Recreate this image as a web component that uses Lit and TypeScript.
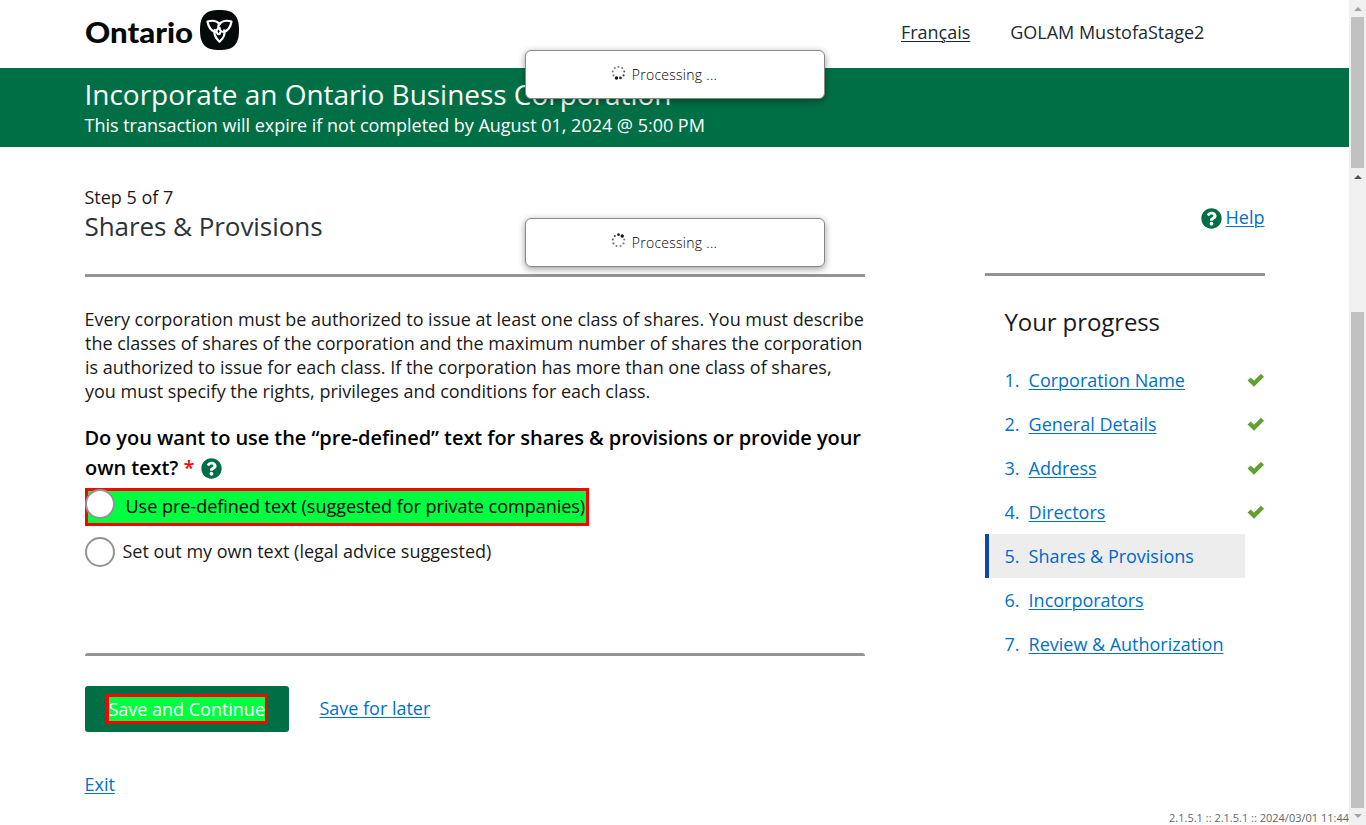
import { LitElement, html, css, svg, nothing } from "lit";
import { customElement, property } from "lit/decorators.js";

@customElement("help-icon")
class HelpIcon extends LitElement {
  static styles = css`
    :host { display: inline-block; width: 21px; height: 21px; }
    svg { display: block; }
  `;
  render() {
    return html`<svg width="21" height="21" viewBox="0 0 512 512">
      <path fill="#006f45" d="M504 256c0 136.997-111.043 248-248 248S8 392.997 8 256C8 119.083 119.043 8 256 8s248 111.083 248 248zM262.655 90c-54.497 0-89.255 22.957-116.549 63.758-3.536 5.286-2.353 12.415 2.715 16.258l34.699 26.31c5.205 3.947 12.621 3.008 16.665-2.122 17.864-22.658 30.113-35.797 57.303-35.797 20.429 0 45.698 13.148 45.698 32.958 0 14.976-12.363 22.667-32.534 33.976C247.128 238.528 216 254.941 216 296v4c0 6.627 5.373 12 12 12h56c6.627 0 12-5.373 12-12v-1.333c0-28.462 83.186-29.647 83.186-106.667 0-58.002-60.165-102-116.531-102zM256 338c-25.365 0-46 20.635-46 46 0 25.364 20.635 46 46 46s46-20.636 46-46c0-25.365-20.635-46-46-46z"/>
    </svg>`;
  }
}

@customElement("processing-box")
class ProcessingBox extends LitElement {
  @property({ type: Number }) lead = 0;
  static styles = css`
    :host {
      display: flex; align-items: center; justify-content: center; box-sizing: border-box;
      width: 300px; height: 49px; padding-right: 22px;
      background: #fff; border: 1px solid #888; border-radius: 6px;
      box-shadow: 0 2px 7px rgba(0, 0, 0, 0.4);
      font-size: 14px; font-weight: 300; color: #000; letter-spacing: 0.27px;
    }
    span { width: 85px; white-space: nowrap; }
    svg { margin: -5px 5.500px 0 0; }
  `;
  render() {
    return html`<svg width="15" height="15" viewBox="0 0 15 15">
      ${Array.from({ length: 9 }, (_, i) => {
        const a = ((this.lead - i * 40) * Math.PI) / 180;
        return svg`<circle cx=${7.5 + 5.8 * Math.sin(a)} cy=${7.5 - 5.8 * Math.cos(a)}
          r=${i < 1 ? 1.7 : i < 2 ? 1.4 : 1.05} fill="#111" opacity=${Math.max(0.55, 1 - i * 0.1)}></circle>`;
      })}
    </svg><span>Processing ...</span>`;
  }
}

const STEPS = [
  { label: "Corporation Name", done: true },
  { label: "General Details", done: true },
  { label: "Address", done: true },
  { label: "Directors", done: true },
  { label: "Shares & Provisions", current: true },
  { label: "Incorporators" },
  { label: "Review & Authorization" },
];

@customElement("app-root")
class AppRoot extends LitElement {
  static styles = css`
    :host {
      display: flex; position: relative; width: 1366px; height: 825px; overflow: hidden;
      background: #fff; color: #1a1a1a; font-family: "Open Sans", sans-serif; font-size: 18px; letter-spacing: -0.015px;
    }
    * { box-sizing: border-box; }
    p, h1, h2, h3, ol { margin: 0; padding: 0; font-weight: 400; }
    p, h1, h2, h3, .step .num { text-indent: -0.5px; }
    a { color: #0070cc; text-decoration: underline; text-decoration-thickness: 1px; text-underline-offset: 2px; }
    .page { width: 1349px; display: flex; flex-direction: column; }
    .top { height: 68px; padding: 0 144.700px 0 85px; display: flex; align-items: center; }
    .logo { display: flex; align-items: center; margin-top: -8px; }
    .word { font: 900 29px/40px Lato, sans-serif; color: #060a0a; width: 115px; padding-top: 3px; white-space: nowrap; transform: scaleX(1.075); transform-origin: 0 0; }
    .account { margin-left: auto; display: flex; gap: 40px; line-height: 24px; margin-top: -4px; white-space: nowrap; }
    .account a, .account span { color: #1a2a33; }
    .banner { height: 79px; background: #006f45; color: #fff; padding: 7px 0 0 85px; }
    .banner h1 { font-size: 28px; line-height: 38px; white-space: nowrap; letter-spacing: -0.03px; }
    .banner p { line-height: 24px; }
    .body { display: flex; justify-content: space-between; padding: 38px 84px 0 85px; }
    .main { width: 780px; }
    .steps { line-height: 24px; }
    .title { font-size: 26px; line-height: 34px; color: #2b3338; letter-spacing: -0.06px; }
    .heading { height: 92px; border-bottom: 3px solid #949494; }
    .intro { margin-top: 30px; line-height: 24px; white-space: nowrap; }
    .ask { margin-top: 20px; height: 60px; line-height: 30px; font-weight: 600; white-space: nowrap; font-size: 20px; color: #000; letter-spacing: -0.065px; }
    .star { color: #f00; }
    .ask help-icon { vertical-align: -4px; margin-left: 2px; }
    .option { display: flex; align-items: center; width: max-content; white-space: nowrap; }
    .circle { width: 30px; height: 30px; border: 2px solid #949494; border-radius: 50%; background: #fff; flex: none; }
    .marked { width: 504px; height: 38px; margin-top: 5px; background: #00ff40; border: 3px solid #f00; color: #000; }
    .marked .circle { margin: -6px 10.500px 0 -3px; }
    .marked, .plain { line-height: 24px; }
    .txt { margin-top: -3px; }
    .plain { height: 30px; margin-top: 11px; gap: 7.500px; }
    .rule { margin-top: 86px; height: 3px; background: #949494; border-radius: 3px 3px 0 0; }
    .actions { display: flex; align-items: center; gap: 30.500px; margin-top: 30px; }
    .actions a { margin-top: -2px; }
    .save { width: 204px; height: 46px; background: #006f45; border-radius: 3px; display: flex; justify-content: center; align-items: center; }
    .save span { width: 162px; height: 30px; border: 3px solid #f00; background: #00ff40; color: #fff; line-height: 25px; white-space: nowrap; text-indent: -0.5px; }
    .exit { margin-top: 40px; line-height: 24px; }
    .side { width: 280px; padding-top: 1px; }
    .help { height: 90px; border-bottom: 3px solid #949494; display: flex; justify-content: flex-end; gap: 4px; padding: 19px 0.500px 0 0; line-height: 24px; }
    .help help-icon { margin-top: 3px; }
    .side h3 { font-size: 24px; line-height: 34px; margin: 29px 0 19px 20px; color: #1a1a1a; letter-spacing: -0.1px; }
    .step { height: 44px; display: flex; align-items: center; padding-left: 20px; color: #0070cc; line-height: 24px; white-space: nowrap; }
    .step .num { width: 23.600px; }
    .step svg { margin-left: auto; }
    .current { width: 260px; background: #ededed; border-left: 4px solid #0b47a5; padding-left: 16px; color: #0066cc; }
    .first { position: absolute; left: 525px; top: 50px; }
    .second { position: absolute; left: 525px; top: 218px; }
    .version { position: absolute; right: 17px; bottom: 0; font-size: 11px; line-height: 15px; color: #666; letter-spacing: 0; }
    .scroll { width: 17px; background: #f0f0f0; display: flex; flex-direction: column; align-items: center; }
    .up, .down { border: 4px solid transparent; height: 0; width: 0; border-top: 0; border-bottom: 4px solid #a3a3a3; margin: 7px 0 6px; flex: none; }
    .up.dark { border-bottom-color: #505050; margin: 7px 0 133px; }
    .thumb { width: 13px; height: 151px; background: #c1c1c1; flex: none; }
    .thumb.long { height: 496px; }
    .down { border-bottom: 0; border-top: 4px solid #a3a3a3; margin: 6px 0; }
  `;

  render() {
    return html`
      <div class="page">
        <header class="top">
          <div class="logo">
            <span class="word">Ontario</span>
            <svg width="39" height="40" viewBox="0 0 39 40">
              <path fill="#060a0a" d="M19.5 0C33 0 39 5 39 20s-6 20-19.5 20S0 35 0 20 6 0 19.5 0Z" />
              <g fill="none" stroke="#fff" stroke-width="2.200" stroke-linejoin="round" stroke-linecap="round">
                <path d="M15 21.800C11 20.800 8.500 17 7.500 11.500c4.500-1.300 9.500-.5 12 2.600 2.500-3.100 7.500-3.900 12-2.600-1 5.500-3.500 9.300-7.500 10.300" />
                <path d="M14.800 19.800c-1.300 4.500.7 8.300 4.700 12 4-3.700 6-7.500 4.700-11.500" />
                <path d="M19.500 14.100c-1.300 1-1.500 2.400-.8 4.200M24 21.800c-2.600.2-4.400-1.100-4.300-3.600-3 .2-4.200 3-2.300 5.300 1.300 1.400 2.700.7 2.700-1" />
              </g>
            </svg>
          </div>
          <nav class="account"><a>Français</a><span>GOLAM MustofaStage2</span></nav>
        </header>
        <section class="banner">
          <h1>Incorporate an Ontario Business Corporation</h1>
          <p>This transaction will expire if not completed by August 01, 2024 @ 5:00 PM</p>
        </section>
        <div class="body">
          <main class="main">
            <div class="heading">
              <p class="steps">Step 5 of 7</p>
              <h2 class="title">Shares &amp; Provisions</h2>
            </div>
            <p class="intro">
              Every corporation must be authorized to issue at least one class of shares. You must describe<br />
              the classes of shares of the corporation and the maximum number of shares the corporation<br />
              is authorized to issue for each class. If the corporation has more than one class of shares,<br />
              you must specify the rights, privileges and conditions for each class.
            </p>
            <p class="ask">
              Do you want to use the “pre-defined” text for shares &amp; provisions or provide your<br />
              own text? <span class="star">*</span> <help-icon></help-icon>
            </p>
            <div class="option marked"><span class="circle"></span><span class="txt">Use pre-defined text (suggested for private companies)</span></div>
            <div class="option plain"><span class="circle"></span><span class="txt">Set out my own text (legal advice suggested)</span></div>
            <div class="rule"></div>
            <div class="actions"><div class="save"><span>Save and Continue</span></div><a>Save for later</a></div>
            <p class="exit"><a>Exit</a></p>
          </main>
          <aside class="side">
            <div class="help"><help-icon></help-icon><a>Help</a></div>
            <h3>Your progress</h3>
            <ol>
              ${STEPS.map((s, i) => html`<div class="step ${s.current ? "current" : ""}">
                <span class="num">${i + 1}.</span>${s.current ? html`<span>${s.label}</span>` : html`<a>${s.label}</a>`}
                ${s.done ? html`<svg width="18" height="14" viewBox="0 0 18 14"><path d="M2.100 6l4.900 4.700L15.500 2.300" fill="none" stroke="#62a030" stroke-width="4.400" /></svg>` : nothing}
              </div>`)}
            </ol>
          </aside>
        </div>
      </div>
      <div class="scroll">
        <i class="up"></i><i class="thumb"></i><i class="up dark"></i><i class="thumb long"></i><i class="down"></i>
      </div>
      <processing-box class="first" .lead=${200}></processing-box>
      <processing-box class="second" .lead=${40}></processing-box>
      <div class="version">2.1.5.1 :: 2.1.5.1 :: 2024/03/01 11:44</div>
    `;
  }
}
